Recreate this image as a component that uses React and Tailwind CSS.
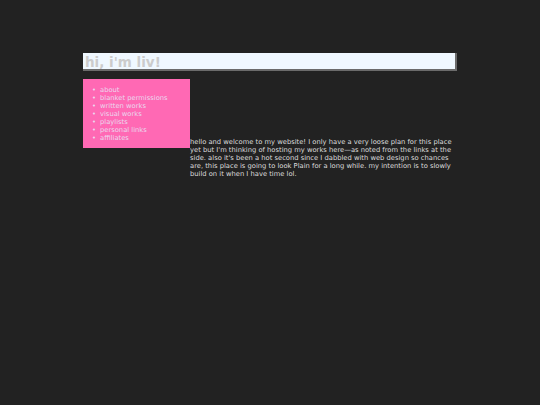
const links = [
  "about",
  "blanket permissions",
  "written works",
  "visual works",
  "playlists",
  "personal links",
  "affiliates",
];

const App = () => {
  return (
    <div className="min-h-[405px] w-full bg-[#222222] pt-[53px] font-['DejaVu_Sans',Verdana,sans-serif]">
      <div className="ml-[83px] w-[374px]">
        <h1 className="h-[18px] border-r-2 border-b-2 border-[#6b6b6b] bg-[#f0f8ff] pt-[3px] pl-[2px] text-[13.5px] font-bold leading-[13px] text-[#cccccc]">
          hi, i'm liv!
        </h1>

        <div className="mt-[8px] flex items-start">
          <ul className="w-[107px] shrink-0 bg-[#ff69b4] pt-[7px] pb-[6px] pl-[9px] text-[6.75px] leading-[8px] text-[#ecd8ee]">
            {links.map((link) => (
              <li key={link} className="flex">
                <span className="w-[8px] shrink-0">•</span>
                <span>{link}</span>
              </li>
            ))}
          </ul>

          <p className="mt-[59px] text-[6.75px] leading-[8px] text-[#dddddd]">
            hello and welcome to my website! I only have a very loose plan for this place yet but I'm
            thinking of hosting my works here—as noted from the links at the side. also it's been a
            hot second since I dabbled with web design so chances are, this place is going to look
            Plain for a long while. my intention is to slowly build on it when I have time lol.
          </p>
        </div>
      </div>
    </div>
  );
};

export default App;
